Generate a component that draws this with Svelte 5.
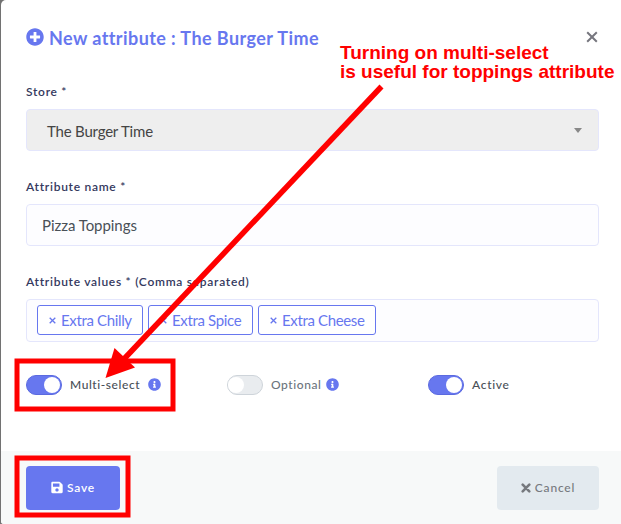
<script>
  const tags = [
    { text: 'Extra Chilly', kind: 'chilly' },
    { text: 'Extra Spice', kind: 'spice' },
    { text: 'Extra Cheese', kind: 'cheese' }
  ];
  let multi = $state(true);
  let optional = $state(false);
  let active = $state(true);
</script>

{#snippet info()}
  <svg class="info" viewBox="0 0 512 512"><path fill="currentColor" d="M256 8C119 8 8 119 8 256s111 248 248 248 248-111 248-248S393 8 256 8zm0 110c23.200 0 42 18.800 42 42s-18.800 42-42 42-42-18.800-42-42 18.800-42 42-42zm56 254c0 6.600-5.400 12-12 12h-88c-6.600 0-12-5.400-12-12v-24c0-6.600 5.400-12 12-12h12v-64h-12c-6.600 0-12-5.400-12-12v-24c0-6.600 5.400-12 12-12h64c6.600 0 12 5.400 12 12v100h12c6.600 0 12 5.400 12 12v24z"/></svg>
{/snippet}

<div class="screen">
  <div class="modal">
    <header>
      <svg class="plus" viewBox="0 0 512 512"><path fill="currentColor" d="M256 8C119 8 8 119 8 256s111 248 248 248 248-111 248-248S393 8 256 8zm144 276c0 6.600-5.400 12-12 12h-92v92c0 6.600-5.400 12-12 12h-56c-6.600 0-12-5.400-12-12v-92h-92c-6.600 0-12-5.400-12-12v-56c0-6.600 5.400-12 12-12h92v-92c0-6.600 5.400-12 12-12h56c6.600 0 12 5.400 12 12v92h92c6.600 0 12 5.400 12 12v56z"/></svg>
      <h1><span>New attribute : The Burger Time</span></h1>
      <button class="close" aria-label="Close">
        <svg width="12" height="12" viewBox="0 0 12 12"><path d="M1.200 1.200 10.800 10.800M10.800 1.200 1.200 10.800" stroke="#76767e" stroke-width="2"/></svg>
      </button>
    </header>

    <main>
      <div class="field">
        <div class="label"><span>Store *</span></div>
        <div class="box select"><span>The Burger Time</span><i class="caret"></i></div>
      </div>
      <div class="field">
        <div class="label"><span>Attribute name *</span></div>
        <div class="box"><span>Pizza Toppings</span></div>
      </div>
      <div class="field">
        <div class="label"><span>Attribute values * (Comma separated)</span></div>
        <div class="box tags">
          {#each tags as tag}
            <div class="tag {tag.kind}">
              <svg width="7" height="7" viewBox="0 0 7 7"><path d="M.7.7 6.300 6.300M6.300.7.7 6.300" stroke="currentColor" stroke-width="1.300"/></svg>
              <span>{tag.text}</span>
            </div>
          {/each}
        </div>
      </div>
      <div class="switches">
        <div class="option">
          <button class="switch" class:on={multi} aria-label="Multi-select" onclick={() => (multi = !multi)}><i></i></button>
          <span class="tight">Multi-select</span>{@render info()}
        </div>
        <div class="option">
          <button class="switch" class:on={optional} aria-label="Optional" onclick={() => (optional = !optional)}><i></i></button>
          <span class="tight">Optional</span>{@render info()}
        </div>
        <div class="option">
          <button class="switch" class:on={active} aria-label="Active" onclick={() => (active = !active)}><i></i></button>
          <span>Active</span>
        </div>
      </div>
    </main>

    <footer>
      <button class="btn save">
        <svg width="12" height="13" viewBox="0 0 448 512"><path fill="currentColor" d="M433.900 129.900l-83.900-83.900A48 48 0 0 0 316.100 32H48C21.500 32 0 53.500 0 80v352c0 26.500 21.500 48 48 48h352c26.500 0 48-21.500 48-48V163.900a48 48 0 0 0-14.100-34zM224 416c-35.300 0-64-28.700-64-64s28.700-64 64-64 64 28.700 64 64-28.700 64-64 64zm96-304.500V212c0 6.600-5.400 12-12 12H76c-6.600 0-12-5.400-12-12V108c0-6.600 5.400-12 12-12h228.500c3.200 0 6.200 1.300 8.500 3.500l3.500 3.500a12 12 0 0 1 3.500 8.500z"/></svg>
        <span>Save</span>
      </button>
      <button class="btn cancel">
        <svg width="10" height="10" viewBox="0 0 10 10"><path d="M1.700 1.700 8.300 8.300M8.300 1.700 1.700 8.300" stroke="currentColor" stroke-width="2.600" stroke-linecap="round"/></svg>
        <span>Cancel</span>
      </button>
    </footer>
  </div>

  <svg class="notes" width="621" height="524" viewBox="0 0 621 524">
    <g fill="none" stroke="#f00" stroke-width="5">
      <rect x="17" y="361" width="156" height="48"/>
      <rect x="17" y="458" width="111" height="57"/>
      <path stroke-width="5.500" d="M381.500 86.500 124 359"/>
    </g>
    <path fill="#f00" d="M105.500 378 114.500 348 135 367.500z"/>
  </svg>
  <div class="callout"><span>Turning on multi-select</span><span>is useful for toppings attribute</span></div>
</div>

<style>
  .screen {
    position: relative;
    box-sizing: border-box;
    width: 621px;
    height: 524px;
    padding-left: 1px;
    overflow: hidden;
    background: #727272;
    font-family: Lato, "Open Sans", sans-serif;
  }
  .screen * { box-sizing: border-box; }
  .modal {
    display: flex;
    flex-direction: column;
    height: 524px;
    background: #fff;
    border-radius: 5px 0 0 3px;
    overflow: hidden;
  }
  span { white-space: nowrap; }
  svg { flex: none; }
  button { border: 0; padding: 0; font-family: inherit; }
  header {
    display: flex;
    align-items: center;
    height: 75px;
    padding: 0 22px 0 25px;
    color: #6777ef;
  }
  .plus { width: 18px; height: 18px; margin: -1px 5px 0 0; }
  h1 { margin: 0; font-size: 18px; line-height: 24px; font-weight: 700; letter-spacing: 0.42px; }
  .close { display: flex; margin-left: auto; padding: 0 1px 2px; background: none; }
  main { height: 376px; padding: 8px 22px 0 25px; }
  .field { height: 95px; }
  .label {
    display: flex;
    align-items: center;
    height: 26px;
    padding-bottom: 8px;
    color: #34395e;
    font-size: 12px;
    line-height: 18px;
    font-weight: 600;
    letter-spacing: 0.72px;
  }
  .box {
    display: flex;
    align-items: center;
    height: 42px;
    padding: 0 15px;
    border: 1px solid #e4e6fc;
    border-radius: 4px;
    background: #fdfdff;
    color: #495057;
    font-size: 15px;
    letter-spacing: -0.05px;
  }
  .select { padding: 1px 16px 0 20px; background: #eee; color: #444; letter-spacing: -0.2px; }
  .caret {
    margin-left: auto;
    border: 4px solid transparent;
    border-top: 5px solid #888;
    border-bottom: 0;
  }
  .tags { height: 43px; padding: 0 10px; gap: 5px; letter-spacing: -0.35px; }
  .tag {
    display: flex;
    align-items: center;
    gap: 5px;
    height: 30px;
    width: 106px;
    margin-top: -1px;
    padding-left: 11px;
    border: 1px solid #6777ef;
    border-radius: 3px;
    background: #fff;
    color: #6777ef;
  }
  .spice { width: 105px; }
  .cheese { width: 118px; }
  .switches { display: flex; height: 30px; margin-top: 2px; align-items: center; }
  .option {
    display: flex;
    align-items: center;
    flex: none;
    width: 201px;
    color: #6c757d;
    font-size: 12px;
    font-weight: 500;
    letter-spacing: 0.7px;
  }
  .option > span { margin-top: -1px; }
  .tight { letter-spacing: 0.57px; }
  .switch {
    display: flex;
    flex: none;
    width: 36px;
    height: 20px;
    padding: 1px 0;
    margin-right: 8px;
    border: 1px solid #ced4da;
    border-radius: 10px;
    background: #e9ecef;
  }
  .switch i { width: 16px; height: 16px; border-radius: 50%; background: #fff; }
  .on { border-color: #5b6ae0; background: #6777ef; justify-content: flex-end; padding-right: 1px; }
  .on + span { color: #495057; }
  .info { width: 13px; height: 13px; margin: -2px 0 0 8px; color: #6777ef; }
  .option:nth-child(2) .info { margin-left: 5px; }
  footer {
    display: flex;
    justify-content: space-between;
    height: 73px;
    padding: 15px 22px 0 25px;
    background: #f7f9f9;
  }
  .btn {
    display: flex;
    align-items: center;
    justify-content: center;
    width: 94px;
    height: 44px;
    padding-bottom: 1px;
    gap: 4px;
    border-radius: 4px;
    font-size: 12px;
    font-weight: 500;
    letter-spacing: 0.8px;
  }
  .save { background: #6777ef; color: #fff; font-weight: 600; }
  .cancel { width: 102px; background: #e3eaef; color: #76797e; }
  .notes { position: absolute; left: 0; top: 0; pointer-events: none; }
  .callout {
    position: absolute;
    left: 340px;
    top: 43px;
    display: flex;
    flex-direction: column;
    color: #f00;
    font: 700 19px/19px "Liberation Sans", Arial, sans-serif;
  }
</style>
